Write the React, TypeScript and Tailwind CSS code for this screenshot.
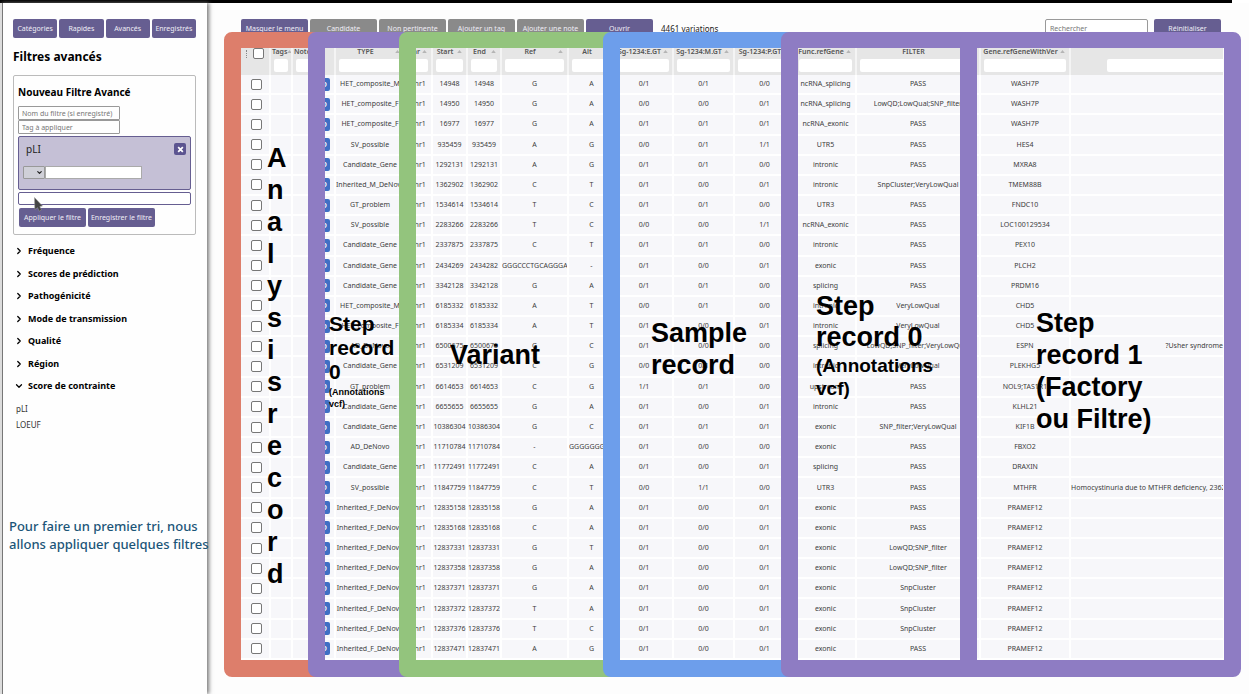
import React from "react";
import { ChevronDown, ChevronRight } from "lucide-react";

type Row = [string, string, string, string, string, string, string, string, string, string, string, string?];

const rows: Row[] = [
  ["HET_composite_M", "14948", "14948", "G", "A", "0/1", "0/1", "0/0", "ncRNA_splicing", "PASS", "WASH7P"],
  ["HET_composite_F", "14950", "14950", "G", "A", "0/0", "0/0", "0/1", "ncRNA_splicing", "LowQD;LowQual;SNP_filter", "WASH7P"],
  ["HET_composite_F", "16977", "16977", "G", "A", "0/1", "0/1", "0/1", "ncRNA_exonic", "PASS", "WASH7P"],
  ["SV_possible", "935459", "935459", "A", "G", "0/0", "0/1", "1/1", "UTR5", "PASS", "HES4"],
  ["Candidate_Gene", "1292131", "1292131", "A", "G", "0/1", "0/1", "0/0", "intronic", "PASS", "MXRA8"],
  ["Inherited_M_DeNovo", "1362902", "1362902", "C", "T", "0/1", "0/0", "0/1", "intronic", "SnpCluster;VeryLowQual", "TMEM88B"],
  ["GT_problem", "1534614", "1534614", "T", "C", "0/1", "0/1", "0/0", "UTR3", "PASS", "FNDC10"],
  ["SV_possible", "2283266", "2283266", "T", "C", "0/0", "0/0", "1/1", "ncRNA_exonic", "PASS", "LOC100129534"],
  ["Candidate_Gene", "2337875", "2337875", "C", "T", "0/1", "0/1", "0/0", "intronic", "PASS", "PEX10"],
  ["Candidate_Gene", "2434269", "2434282", "GGGCCCTGCAGGGA", "-", "0/1", "0/0", "0/1", "exonic", "PASS", "PLCH2"],
  ["Candidate_Gene", "3342128", "3342128", "G", "A", "0/1", "0/1", "0/0", "splicing", "PASS", "PRDM16"],
  ["HET_composite_M", "6185332", "6185332", "A", "T", "0/0", "0/1", "0/0", "intronic", "VeryLowQual", "CHD5"],
  ["HET_composite_F", "6185334", "6185334", "A", "T", "0/1", "0/0", "0/1", "intronic", "VeryLowQual", "CHD5"],
  ["AD_DeNovo", "6500675", "6500675", "G", "C", "0/1", "0/0", "0/0", "splicing", "LowQD;SNP_filter;VeryLowQual", "ESPN", "?Usher syndrome"],
  ["Candidate_Gene", "6531209", "6531209", "C", "G", "0/0", "0/1", "0/0", "intronic", "VeryLowQual", "PLEKHG5"],
  ["GT_problem", "6614653", "6614653", "C", "G", "1/1", "0/1", "0/0", "upstream", "PASS", "NOL9;TAS1R1"],
  ["Candidate_Gene", "6655655", "6655655", "G", "A", "0/1", "0/0", "0/1", "intronic", "PASS", "KLHL21"],
  ["Candidate_Gene", "10386304", "10386304", "G", "C", "0/1", "0/1", "0/1", "exonic", "SNP_filter;VeryLowQual", "KIF1B"],
  ["AD_DeNovo", "11710784", "11710784", "-", "GGGGGGGGGG", "0/1", "0/0", "0/0", "exonic", "PASS", "FBXO2"],
  ["Candidate_Gene", "11772491", "11772491", "C", "A", "0/1", "0/0", "0/1", "splicing", "PASS", "DRAXIN"],
  ["SV_possible", "11847759", "11847759", "C", "T", "0/0", "1/1", "0/0", "UTR3", "PASS", "MTHFR", "Homocystinuria due to MTHFR deficiency, 236250"],
  ["Inherited_F_DeNovo", "12835158", "12835158", "G", "A", "0/1", "0/0", "0/1", "exonic", "PASS", "PRAMEF12"],
  ["Inherited_F_DeNovo", "12835168", "12835168", "C", "A", "0/1", "0/0", "0/1", "exonic", "PASS", "PRAMEF12"],
  ["Inherited_F_DeNovo", "12837331", "12837331", "G", "T", "0/1", "0/0", "0/1", "exonic", "LowQD;SNP_filter", "PRAMEF12"],
  ["Inherited_F_DeNovo", "12837358", "12837358", "G", "A", "0/1", "0/0", "0/1", "exonic", "LowQD;SNP_filter", "PRAMEF12"],
  ["Inherited_F_DeNovo", "12837371", "12837371", "G", "A", "0/1", "0/0", "0/1", "exonic", "SnpCluster", "PRAMEF12"],
  ["Inherited_F_DeNovo", "12837372", "12837372", "T", "A", "0/1", "0/0", "0/1", "exonic", "SnpCluster", "PRAMEF12"],
  ["Inherited_F_DeNovo", "12837376", "12837376", "T", "C", "0/1", "0/0", "0/1", "exonic", "SnpCluster", "PRAMEF12"],
  ["Inherited_F_DeNovo", "12837471", "12837471", "A", "G", "0/1", "0/0", "0/1", "exonic", "PASS", "PRAMEF12"],
];

const columnWidths = [
  "w-[28px]", "w-[22px]", "w-[24px]", "w-[19px]", "w-[70px]", "w-[27px]", "w-[35px]", "w-[34px]",
  "w-[67px]", "w-[47px]", "w-[58px]", "w-[61px]", "w-[61px]", "w-[61px]", "w-[124px]", "w-[90px]", "",
];

const headers = [
  "Tags", "Notes", "", "TYPE", "Chr", "Start", "End", "Ref", "Alt",
  "Sg-1234:E.GT", "Sg-1234:M.GT", "Sg-1234:P.GT", "Func.refGene", "FILTER", "Gene.refGeneWithVer", "",
];

const CELL = "border-l-2 border-b-2 border-white bg-[#f7f7fa] p-0 text-center whitespace-nowrap overflow-hidden";
const BTN = "h-[19px] rounded-[2px] text-[7px] leading-[19px] text-[#f0eef6] text-center whitespace-nowrap";

function HeaderCell({ label, last, narrow }: { label: string; last: boolean; narrow: boolean }) {
  const name = label || (last ? "Phenotype" : "Id");
  return (
    <th className="overflow-hidden border-l-2 border-[#f4f4f4] p-0 align-top font-semibold">
      <div className="flex h-[15px] items-center whitespace-nowrap">
        <span className={narrow ? "pl-px" : "flex-1 text-center"}>{label}</span>
        {label && (
          <svg viewBox="0 0 6 4" className={`h-[3px] w-[5px] shrink-0 ${narrow ? "" : "mr-1"}`} aria-hidden="true">
            <path d="M0 4 3 0 6 4Z" fill="#b5b5b5" />
          </svg>
        )}
      </div>
      {label !== "" || last ? (
        <input
          aria-label={`Filtrer ${name}`}
          className={`block h-[13px] rounded-[2px] bg-white ${last ? "ml-[36px] w-full" : "mx-auto w-[calc(100%-6px)]"}`}
        />
      ) : null}
    </th>
  );
}

function VariantTable() {
  return (
    <div className="mt-[6px] overflow-hidden">
      <table className="h-[616px] w-full table-fixed border-separate border-spacing-0 text-[7px] leading-[14px] text-[#3c3c3c]">
        <colgroup>
          {columnWidths.map((w, i) => (
            <col key={i} className={w} />
          ))}
        </colgroup>
        <thead className="bg-[#e6e6e6] text-[#555]">
          <tr className="h-[31px] shadow-[0_1px_2px_#777]">
            <th className="p-0 align-top">
              <div className="flex items-center gap-[6px] pt-[4px] pl-[5px]">
                <span className="h-[8px] w-px border-l border-dotted border-[#888]" />
                <input type="checkbox" aria-label="Tout sélectionner" className="h-[11px] w-[11px] appearance-none rounded-[2px] border border-[#777] bg-white" />
              </div>
            </th>
            {headers.map((h, i) => (
              <HeaderCell key={i} label={h} last={i === headers.length - 1} narrow={i < 2} />
            ))}
          </tr>
        </thead>
        <tbody>
          {rows.map((r, i) => (
            <tr key={i}>
              <td className="border-b-2 border-white bg-[#f7f7fa] p-0 pl-[2px]">
                <input type="checkbox" aria-label={`Sélectionner ${r[1]}`} className="mx-auto block h-[11px] w-[11px] appearance-none rounded-[2px] border border-[#777] bg-white" />
              </td>
              <td className={CELL} />
              <td className={CELL} />
              <td className="border-b-2 border-white bg-[#f7f7fa] p-0">
                <span className="ml-px block h-[13px] w-[14px] rounded-[2px] bg-[#3f6fc4] text-center text-[7px] leading-[13px] font-semibold text-white">ID</span>
              </td>
              <td className={CELL}>{r[0]}</td>
              <td className={CELL}>chr1</td>
              {r.slice(1, 11).map((v, j) => (
                <td key={j} className={CELL}>{v}</td>
              ))}
              <td className="overflow-hidden border-b-2 border-l-2 border-white bg-[#f7f7fa] p-0 whitespace-nowrap">
                {r[11] && <span className={r[11].startsWith("?") ? "block text-right" : ""}>{r[11]}</span>}
              </td>
            </tr>
          ))}
        </tbody>
      </table>
    </div>
  );
}

function Annotations() {
  const frame = "shrink-0 rounded-[8px] border-[17px] border-t-[16px] font-bold text-black";
  return (
    <div className="pointer-events-none absolute top-[29px] right-2 left-[17px] flex h-[645px] font-['Liberation_Sans',Arial,sans-serif] text-[27px] leading-8">
      <div className={`${frame} w-[101px] border-[#dd7e6b] pt-[94px] pl-[26px]`}>
        {"Analysisrecord".split("").map((c, i) => (
          <div key={i}>{c}</div>
        ))}
      </div>
      <div className={`${frame} -ml-[17px] w-[108px] border-[#8e7cc3] pt-[264px] pl-1 text-[21px] leading-[24px]`}>
        <div className="w-[80px]">Step<br />record<br />0</div>
        <div className="mt-[2px] w-[80px] text-[9px] leading-3">(Annotations<br />vcf)</div>
      </div>
      <div className={`${frame} -ml-[17px] w-[221px] border-[#93c47d] pt-[291px] pl-[34px]`}>Variant</div>
      <div className={`${frame} -ml-[17px] w-[195px] border-[#6d9eeb] pt-[269px] pl-[31px]`}>Sample<br />record</div>
      <div className={`${frame} -ml-[17px] w-[196px] border-[#8e7cc3] pt-[243px] pl-[18px] leading-[31px]`}>
        Step<br />record 0
        <div className="mt-px text-[19px] leading-[23px]">(Annotations<br />vcf)</div>
      </div>
      <div className={`${frame} -ml-[17px] min-w-0 flex-1 border-[#8e7cc3] pt-[259px] pl-[59px]`}>
        Step<br />record 1<br />(Factory<br />ou Filtre)
      </div>
    </div>
  );
}

const sections = ["Fréquence", "Scores de prédiction", "Pathogénicité", "Mode de transmission", "Qualité", "Région", "Score de contrainte"];

function Sidebar() {
  return (
    <aside className="relative z-10 w-[207px] shrink-0 border-l-2 border-[#dcdcdc] bg-[#fefefe] pt-4 pl-[11px] shadow-[inset_1px_0_0_#777,2px_0_4px_#777]">
      <nav className="mr-[11px] grid grid-cols-4 gap-[2px]">
        {["Catégories", "Rapides", "Avancés", "Enregistrés"].map((t) => (
          <button key={t} className={`${BTN} bg-[#665e91]`}>{t}</button>
        ))}
      </nav>
      <h1 className="mt-[11px] text-[12px] leading-4 font-bold text-black">Filtres avancés</h1>
      <form className="mt-[10px] mr-[11px] rounded-[2px] border border-[#bbb] px-1 pb-[7px]">
        <h2 className="mt-[9px] text-[10px] leading-[14px] font-bold text-black">Nouveau Filtre Avancé</h2>
        <input aria-label="Nom du filtre" placeholder="Nom du filtre (si enregistré)" className="mt-[7px] block h-[14px] w-[102px] rounded-[1px] border border-[#999] px-[3px] text-[7px] placeholder:text-[#777]" />
        <input aria-label="Tag" placeholder="Tag à appliquer" className="block h-[14px] w-[102px] rounded-[1px] border border-[#999] px-[3px] text-[7px] placeholder:text-[#777]" />
        <div className="mt-[2px] h-[54px] rounded-[2px] border border-[#665e91] bg-[#c5c0d6] px-1 pt-[6px]">
          <div className="flex items-center justify-between pl-[3px]">
            <span className="text-[10px] leading-3 text-[#222]">pLI</span>
            <button type="button" aria-label="Supprimer" className="flex h-[12px] w-[12px] items-center justify-center rounded-[2px] bg-[#5c5490]">
              <svg viewBox="0 0 6 6" className="h-[7px] w-[7px]"><path d="M1 1 5 5M5 1 1 5" stroke="#fff" strokeWidth="1.5" /></svg>
            </button>
          </div>
          <div className="mt-[11px] flex">
            <div className="relative h-[13px] w-[22px]">
              <select aria-label="Opérateur" className="block h-full w-full appearance-none rounded-[1px] border border-[#999] bg-[#d0d0d8] text-[7px]">
                <option></option>
              </select>
              <ChevronDown className="pointer-events-none absolute top-[3px] right-[2px] h-[7px] w-[7px] text-[#222]" strokeWidth={4} />
            </div>
            <input aria-label="Valeur" className="h-[13px] w-[97px] border border-[#aaa] bg-white text-[7px]" />
          </div>
        </div>
        <div className="relative mt-[2px]">
          <input aria-label="Nouvelle condition" className="block h-[13px] w-full rounded-[2px] border border-[#665e91] bg-white text-[7px]" />
          <svg viewBox="0 0 9 15" className="absolute top-[5px] left-4 h-[15px] w-[9px]" aria-hidden="true">
            <path d="M.5.5 8.5 9 5.8 9.4 7.4 13 5.2 14.2 3.6 10.7.8 12.5Z" fill="#454545" stroke="#999" strokeWidth=".5" />
          </svg>
        </div>
        <div className="mt-[3px] flex gap-[2px] pl-px">
          <button type="button" className={`${BTN} w-[67px] bg-[#665e91]`}>Appliquer le filtre</button>
          <button type="button" className={`${BTN} w-[67px] bg-[#665e91]`}>Enregistrer le filtre</button>
        </div>
      </form>
      <ul className="mt-[5px] flex h-[157px] flex-col justify-between text-[9px] leading-[22px] font-bold text-black">
        {sections.map((s, i) => (
          <li key={s}>
            <button className="flex h-[22px] items-center gap-[4px] pl-[1px]">
              {i === sections.length - 1 ? <ChevronDown className="h-[10px] w-[10px]" strokeWidth={3} /> : <ChevronRight className="h-[10px] w-[10px]" strokeWidth={3} />}
              {s}
            </button>
          </li>
        ))}
      </ul>
      <ul className="mt-1 pl-[3px] text-[8px] leading-4 text-[#333]">
        <li>pLI</li>
        <li>LOEUF</li>
      </ul>
      <p className="mt-[84px] -ml-1 text-[13px] leading-[18px] font-medium whitespace-nowrap text-[#1b5578]">
        Pour faire un premier tri, nous<br />allons appliquer quelques filtres
      </p>
    </aside>
  );
}

export default function App() {
  return (
    <div className="flex min-h-screen flex-col bg-white font-['Noto_Sans',sans-serif]">
      <div className="mr-[17px] h-[3px] bg-black" />
      <div className="flex flex-1">
        <Sidebar />
        <main className="relative min-w-0 flex-1 bg-[#fdfdfd] pt-4 pr-[26px] pl-[34px]">
          <div className="flex items-center pr-[2px]">
            <div className="flex gap-[2px]">
              <button className={`${BTN} w-[67px] bg-[#665e91]`}>Masquer le menu</button>
              {["Candidate", "Non pertinente", "Ajouter un tag", "Ajouter une note"].map((t) => (
                <button key={t} className={`${BTN} w-[67px] bg-[#8a8a8a]`}>{t}</button>
              ))}
              <button className={`${BTN} w-[67px] bg-[#665e91]`}>Ouvrir</button>
            </div>
            <span className="ml-2 text-[8px] leading-[19px] text-[#222]">4461 variations</span>
            <input aria-label="Rechercher" placeholder="Rechercher" className="ml-auto h-[19px] w-[103px] rounded-[2px] border border-[#999] bg-white px-1 text-[7px] placeholder:text-[#777]" />
            <button className={`${BTN} ml-[6px] w-[67px] bg-[#665e91]`}>Réinitialiser</button>
          </div>
          <VariantTable />
          <Annotations />
        </main>
      </div>
    </div>
  );
}
